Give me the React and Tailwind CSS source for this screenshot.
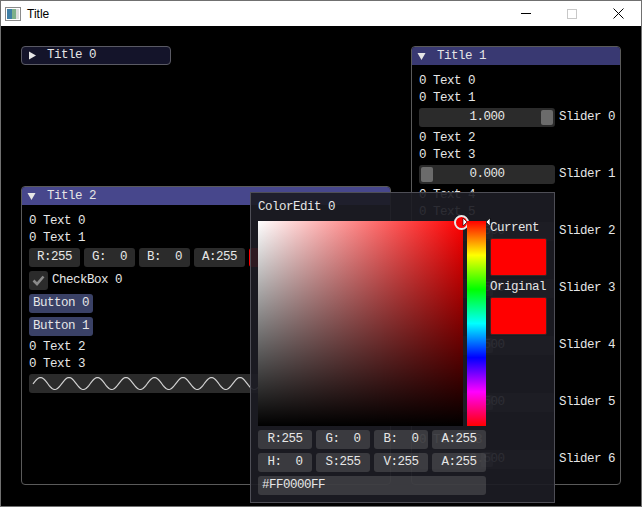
import React from 'react';

const font = "font-['Liberation_Mono',monospace] text-[12.5px] tracking-[-0.5px] text-[#e6e6e6] whitespace-pre";
const mono = `${font} leading-[13px]`;
const frame = 'bg-[rgba(110,110,110,0.39)] rounded-[3px]';

// Text line, 13px tall, glyphs sit a bit low like the bitmap font
const Line = ({ children }) => <div className={`h-[13px] ${font} leading-[15px]`}>{children}</div>;

const TriDown = () => (
  <svg width="9" height="9" viewBox="0 0 9 9" className="shrink-0">
    <polygon points="0.5,1 8.5,1 4.5,8" fill="#e6e6e6" />
  </svg>
);

const TriRight = () => (
  <svg width="9" height="9" viewBox="0 0 9 9" className="shrink-0">
    <polygon points="1,0.5 8,4.5 1,8.5" fill="#e6e6e6" />
  </svg>
);

const Slider = ({ value, label, grab }) => (
  <div className="flex items-center gap-1 h-[19px]">
    <div className={`relative w-[136px] h-[19px] flex items-center justify-center ${frame}`}>
      <div className={`absolute top-[2px] w-[12px] h-[15px] rounded-[2px] bg-[rgba(255,255,255,0.3)] ${grab}`} />
      <span className={`relative ${mono}`}>{value}</span>
    </div>
    <span className={mono}>{label}</span>
  </div>
);

const Drag = ({ text, w }) => (
  <div className={`h-[19px] flex items-center justify-center ${w} ${frame} ${mono}`}>{text}</div>
);

const sinePath = () => {
  let d = '';
  for (let x = 0; x <= 235; x += 1) {
    const y = 9.5 - 6 * Math.cos((2 * Math.PI * (x - 7.5)) / 28.5);
    d += (x === 0 ? 'M' : 'L') + (x + 4) + ' ' + y.toFixed(2) + ' ';
  }
  return d;
};

const sliders = [
  { v: '1.000', g: 'left-[122px]' },
  { v: '0.000', g: 'left-[2px]' },
  { v: '0.500', g: 'left-[62px]' },
  { v: '0.500', g: 'left-[62px]' },
  { v: '0.500', g: 'left-[62px]' },
  { v: '0.500', g: 'left-[62px]' },
  { v: '0.500', g: 'left-[62px]' },
];

export default function App() {
  return (
    <div className="w-[642px] h-[507px] border border-[#707070] flex flex-col bg-black overflow-hidden">
      {/* os title bar */}
      <div className="h-[25px] bg-white flex items-center shrink-0">
        <svg width="16" height="16" viewBox="0 0 16 16" className="ml-[4px]">
          <rect x="0.5" y="1.5" width="15" height="13" fill="#fff" stroke="#8a8a8a" />
          <rect x="2" y="3" width="5" height="10" fill="#3f7fa6" />
          <rect x="7" y="3" width="4" height="10" fill="#7fb08a" />
          <rect x="11" y="3" width="3" height="10" fill="#dcdcdc" />
        </svg>
        <span className="ml-[6px] font-['Liberation_Sans',Arial,sans-serif] text-[12px] text-black">Title</span>
        <div className="ml-auto flex h-full">
          <div className="w-[46px] h-full flex items-center justify-center">
            <div className="w-[10px] h-px bg-black" />
          </div>
          <div className="w-[46px] h-full flex items-center justify-center">
            <div className="w-[10px] h-[10px] border border-[#c8c8c8]" />
          </div>
          <div className="w-[46px] h-full flex items-center justify-center">
            <svg width="11" height="11" viewBox="0 0 11 11">
              <path d="M0.5 0.5L10.5 10.5M10.5 0.5L0.5 10.5" stroke="#000" strokeWidth="1" />
            </svg>
          </div>
        </div>
      </div>

      {/* desktop */}
      <div className="relative flex-1 bg-black">
        {/* Title 0, collapsed */}
        <div className="absolute left-[20px] top-[20px] w-[150px] h-[19px] border border-[#5a5a64] rounded-[4px] bg-[#14142a] flex items-center pl-[6px]">
          <TriRight />
          <span className={`ml-[10px] ${mono}`}>Title 0</span>
        </div>

        {/* Title 1 */}
        <div className="absolute left-[410px] top-[20px] w-[210px] h-[439px] border border-[#5a5a5a] rounded-[4px] bg-black overflow-hidden flex flex-col">
          <div className="h-[18px] bg-[#393972] flex items-center pl-[5px] shrink-0">
            <TriDown />
            <span className={`ml-[11px] ${mono}`}>Title 1</span>
          </div>
          <div className="pl-[7px] pt-[9px] flex flex-col gap-1">
            {sliders.map((s, i) => (
              <React.Fragment key={i}>
                <Line>0 Text {i * 2}</Line>
                <Line>0 Text {i * 2 + 1}</Line>
                <Slider value={s.v} label={`Slider ${i}`} grab={s.g} />
              </React.Fragment>
            ))}
          </div>
        </div>

        {/* Title 2 */}
        <div className="absolute left-[20px] top-[160px] w-[370px] h-[299px] border border-[#5a5a5a] rounded-[4px] bg-black overflow-hidden flex flex-col">
          <div className="h-[18px] bg-[#47478c] flex items-center pl-[5px] shrink-0">
            <TriDown />
            <span className={`ml-[11px] ${mono}`}>Title 2</span>
          </div>
          <div className="pl-[7px] pt-[9px] flex flex-col gap-1">
            <Line>0 Text 0</Line>
            <Line>0 Text 1</Line>
            <div className="flex gap-1">
              <Drag text="R:255" w="w-[51px]" />
              <Drag text="G:  0" w="w-[51px]" />
              <Drag text="B:  0" w="w-[51px]" />
              <Drag text="A:255" w="w-[51px]" />
              <div className="w-[19px] h-[19px] rounded-[3px] bg-[#ff0000]" />
            </div>
            <div className="flex items-center gap-1 h-[19px]">
              <div className={`w-[19px] h-[19px] flex items-center justify-center ${frame}`}>
                <svg width="13" height="13" viewBox="0 0 13 13">
                  <path d="M1.5 6.5L5 10L11.5 2.5" fill="none" stroke="#8a8a8a" strokeWidth="2.6" />
                </svg>
              </div>
              <span className={mono}>CheckBox 0</span>
            </div>
            <div className="h-[19px] w-[64px] rounded-[3px] bg-[#3a4166] flex items-center pl-[4px]">
              <span className={mono}>Button 0</span>
            </div>
            <div className="h-[19px] w-[64px] rounded-[3px] bg-[#3a4166] flex items-center pl-[4px]">
              <span className={mono}>Button 1</span>
            </div>
            <Line>0 Text 2</Line>
            <Line>0 Text 3</Line>
            <div className={`w-[239px] h-[19px] ${frame}`}>
              <svg width="239" height="19" viewBox="0 0 239 19">
                <path d={sinePath()} fill="none" stroke="#d2d2d2" strokeWidth="1.2" />
              </svg>
            </div>
          </div>
        </div>

        {/* ColorEdit popup */}
        <div className="absolute left-[249px] top-[166px] w-[305px] h-[311px] border border-[#4e4e56] bg-[rgba(28,28,36,0.92)] p-[7px] flex flex-col gap-1">
          <div className="mb-1">
            <Line>ColorEdit 0</Line>
          </div>
          <div className="flex gap-1">
            <div className="relative w-[205px] h-[205px] bg-[linear-gradient(to_right,#ffffff,#ff0000)]">
              <div className="absolute inset-0 bg-[linear-gradient(to_bottom,rgba(0,0,0,0),#000000)]" />
              <div className="absolute left-[196px] top-[-6px] w-[15px] h-[15px] rounded-full border-2 border-[#e8e8e8] bg-[#ff0000]" />
            </div>
            <div className="relative w-[19px] h-[205px] bg-[linear-gradient(to_bottom,#ff0000,#ffff00,#00ff00,#00ffff,#0000ff,#ff00ff,#ff0000)]">
              <svg width="29" height="10" viewBox="0 0 29 10" className="absolute left-[-5px] top-[-4px]">
                <polygon points="1,1 5,5 1,9" fill="#fff" stroke="#000" strokeWidth="0.6" />
                <polygon points="28,1 24,5 28,9" fill="#fff" stroke="#000" strokeWidth="0.6" />
              </svg>
            </div>
            <div className="flex flex-col gap-1">
              <Line>Current</Line>
              <div className="w-[57px] h-[38px] rounded-[2px] bg-[#ff0000] border border-[#3c2424]" />
              <Line>Original</Line>
              <div className="w-[57px] h-[38px] rounded-[2px] bg-[#ff0000] border border-[#3c2424]" />
            </div>
          </div>
          <div className="flex gap-1">
            <Drag text="R:255" w="w-[54px]" />
            <Drag text="G:  0" w="w-[54px]" />
            <Drag text="B:  0" w="w-[54px]" />
            <Drag text="A:255" w="w-[54px]" />
          </div>
          <div className="flex gap-1">
            <Drag text="H:  0" w="w-[54px]" />
            <Drag text="S:255" w="w-[54px]" />
            <Drag text="V:255" w="w-[54px]" />
            <Drag text="A:255" w="w-[54px]" />
          </div>
          <div className={`w-[228px] h-[19px] flex items-center pl-[4px] ${frame}`}>
            <span className={mono}>#FF0000FF</span>
          </div>
        </div>
      </div>
    </div>
  );
}
